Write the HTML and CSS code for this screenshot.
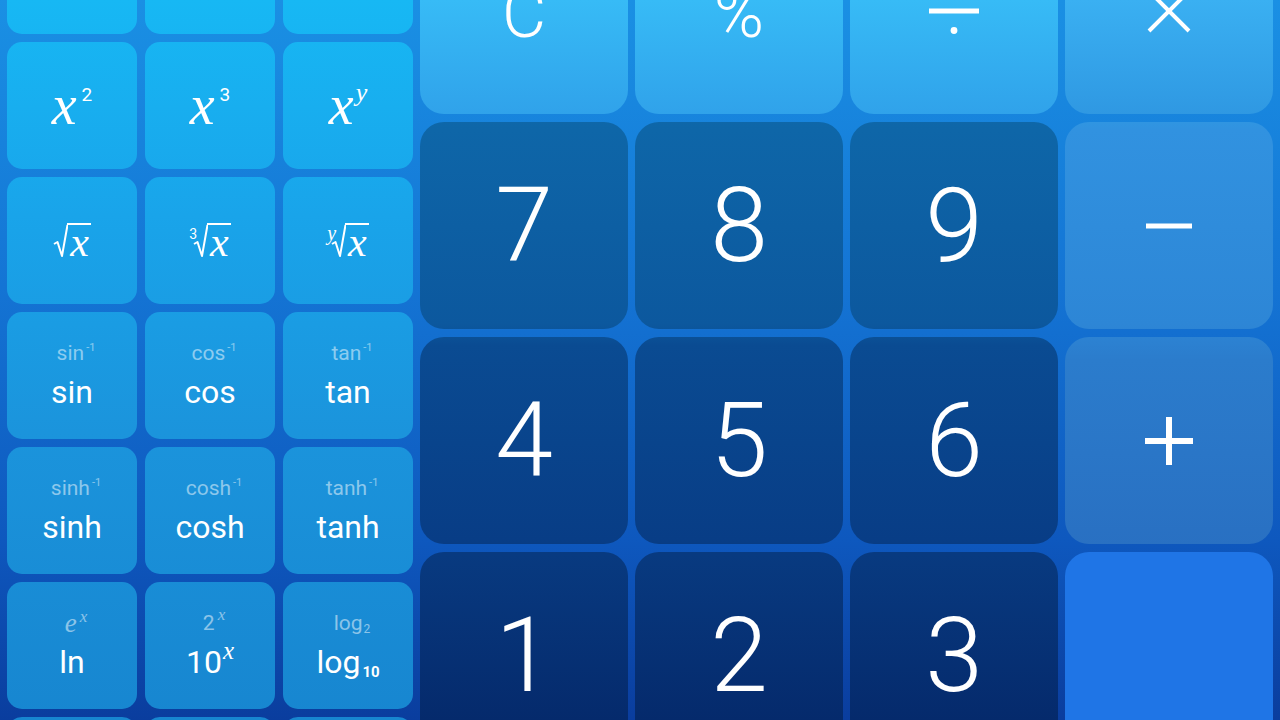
FILE: index.html
```html
<!DOCTYPE html>
<html lang="en">
<head>
  <meta charset="UTF-8">
  <meta name="viewport" content="width=device-width, initial-scale=1.0">
  <title>Calculator</title>
  <link rel="stylesheet" href="styles.css">
</head>
<body>
  <div class="screen">
    <!-- scientific functions -->
    <div class="sci">
      <div class="key fn"></div>
      <div class="key fn"></div>
      <div class="key fn"></div>

      <div class="key fn"><span class="pow"><i class="var big">x</i><span class="exp">2</span></span></div>
      <div class="key fn"><span class="pow"><i class="var big">x</i><span class="exp">3</span></span></div>
      <div class="key fn"><span class="pow"><i class="var big">x</i><i class="exp ity">y</i></span></div>

      <div class="key fn">
        <span class="root">
          <svg class="rad" width="15" height="34" viewBox="0 0 15 34"><path d="M1 20 L4.5 18 L9 32 L14.5 1" fill="none" stroke="#fff" stroke-width="2" stroke-linejoin="round"/></svg><i class="var mid radicand">x</i>
        </span>
      </div>
      <div class="key fn">
        <span class="root">
          <span class="idx">3</span><svg class="rad" width="15" height="34" viewBox="0 0 15 34"><path d="M1 20 L4.5 18 L9 32 L14.5 1" fill="none" stroke="#fff" stroke-width="2" stroke-linejoin="round"/></svg><i class="var mid radicand">x</i>
        </span>
      </div>
      <div class="key fn">
        <span class="root">
          <i class="idx idy">y</i><svg class="rad" width="15" height="34" viewBox="0 0 15 34"><path d="M1 20 L4.5 18 L9 32 L14.5 1" fill="none" stroke="#fff" stroke-width="2" stroke-linejoin="round"/></svg><i class="var mid radicand">x</i>
        </span>
      </div>

      <div class="key fn"><span class="alt">sin<span class="neg">-1</span></span><span class="name">sin</span></div>
      <div class="key fn"><span class="alt">cos<span class="neg">-1</span></span><span class="name">cos</span></div>
      <div class="key fn"><span class="alt">tan<span class="neg">-1</span></span><span class="name">tan</span></div>

      <div class="key fn"><span class="alt">sinh<span class="neg">-1</span></span><span class="name">sinh</span></div>
      <div class="key fn"><span class="alt">cosh<span class="neg">-1</span></span><span class="name">cosh</span></div>
      <div class="key fn"><span class="alt">tanh<span class="neg">-1</span></span><span class="name">tanh</span></div>

      <div class="key fn"><span class="alt"><i class="alt-e">e</i><i class="alt-x">x</i></span><span class="name">ln</span></div>
      <div class="key fn"><span class="alt">2<i class="alt-x">x</i></span><span class="name">10<i class="name-x">x</i></span></div>
      <div class="key fn"><span class="alt">log<span class="sub-s">2</span></span><span class="name">log<span class="sub-b">10</span></span></div>

      <div class="key fn"></div>
      <div class="key fn"></div>
      <div class="key fn"></div>
    </div>

    <!-- main keypad -->
    <div class="pad">
      <div class="key top"><span class="sym">C</span></div>
      <div class="key top"><span class="sym">%</span></div>
      <div class="key top">
        <svg width="50" height="50" viewBox="0 0 50 50"><circle cx="25" cy="5.5" r="3.4" fill="#fff"/><rect x="0" y="22.5" width="50" height="5" fill="#fff"/><circle cx="25" cy="44.5" r="3.4" fill="#fff"/></svg>
      </div>
      <div class="key op">
        <svg width="44" height="44" viewBox="0 0 44 44"><path d="M2 2 L42 42 M42 2 L2 42" stroke="#fff" stroke-width="4"/></svg>
      </div>

      <div class="key num">7</div>
      <div class="key num">8</div>
      <div class="key num">9</div>
      <div class="key op">
        <svg width="46" height="6" viewBox="0 0 46 6"><rect x="0" y="0.5" width="46" height="5" fill="#fff"/></svg>
      </div>

      <div class="key num">4</div>
      <div class="key num">5</div>
      <div class="key num">6</div>
      <div class="key op">
        <svg width="48" height="48" viewBox="0 0 48 48"><path d="M0 24 H48 M24 0 V48" stroke="#fff" stroke-width="6"/></svg>
      </div>

      <div class="key num">1</div>
      <div class="key num">2</div>
      <div class="key num">3</div>
      <div class="key eq"></div>
    </div>
  </div>
</body>
</html>
```

FILE: styles.css
```css
html, body {
  margin: 0;
  height: 720px;
  overflow: hidden;
}
body {
  font-family: Roboto, "Noto Sans", sans-serif;
  color: #fff;
  background: linear-gradient(180deg, #1a90e4 0%, #1474d4 40%, #0e58be 75%, #0a3d9e 100%);
}
.screen {
  display: flex;
  gap: 7px;
  padding: 0 7px;
  margin-top: -93px;
}
.key {
  display: flex;
  flex-direction: column;
  align-items: center;
  justify-content: center;
  line-height: 1;
}

/* left block */
.sci {
  display: grid;
  grid-template-columns: repeat(3, 130px);
  grid-auto-rows: 127px;
  gap: 8px;
}
.fn {
  border-radius: 15px;
  background: linear-gradient(180deg, #17b8f4 0%, #19a4ea 30%, #1b94dc 60%, #1786d0 100%) fixed;
}
.var {
  font-family: "Liberation Serif", serif;
  font-style: italic;
}
.big { font-size: 56px; }
.mid { font-size: 42px; }
.pow {
  display: flex;
  align-items: baseline;
  margin-top: -2px;
}
.exp {
  font-size: 19px;
  margin-left: 5px;
  transform: translateY(-23px);
}
.ity {
  font-family: "Liberation Serif", serif;
  font-style: italic;
  font-size: 26px;
  margin-left: 2px;
}
.root {
  display: flex;
  align-items: flex-start;
}
.rad {
  display: block;
  margin-top: 1px;
}
.radicand {
  display: block;
  border-top: 2px solid #fff;
  padding: 2px 2px 0 3px;
  margin-left: -1px;
  line-height: 30px;
}
.idx {
  font-size: 14px;
  margin-top: 4px;
  margin-right: -4px;
}
.idy {
  font-family: "Liberation Serif", serif;
  font-style: italic;
  font-size: 20px;
  margin-top: 0;
  margin-right: -5px;
}
.alt {
  height: 24px;
  font-size: 21px;
  line-height: 24px;
  color: rgba(255, 255, 255, 0.5);
  margin-bottom: 9px;
  margin-left: 8px;
}
.name {
  height: 36px;
  font-size: 32px;
  line-height: 36px;
}
.neg, .alt-x, .name-x, .sub-s, .sub-b {
  line-height: 0;
}
.neg {
  font-size: 11px;
  vertical-align: 9px;
  margin-left: 2px;
}
.alt-e {
  font-family: "Liberation Serif", serif;
  font-size: 27px;
}
.alt-x {
  font-family: "Liberation Serif", serif;
  font-size: 17px;
  vertical-align: 10px;
  margin-left: 3px;
}
.name-x {
  font-family: "Liberation Serif", serif;
  font-size: 25px;
  vertical-align: 14px;
  margin-left: 1px;
}
.sub-s {
  font-size: 12px;
  vertical-align: -3px;
  margin-left: 1px;
}
.sub-b {
  font-size: 15px;
  font-weight: 700;
  vertical-align: -4px;
  margin-left: 2px;
}

/* right keypad */
.pad {
  display: grid;
  grid-template-columns: repeat(4, 208px);
  grid-auto-rows: 207px;
  gap: 8px 7px;
}
.pad .key {
  border-radius: 24px;
}
.top {
  background: linear-gradient(180deg, #37bbf6 0%, #30a2ea 16%) fixed;
}
.sym {
  font-size: 68px;
  font-weight: 300;
  padding-top: 6px;
}
.op {
  background: linear-gradient(180deg, #3ab0f2 0%, #2f98e2 16%, #3192e0 18%, #2d86d6 45%, #2b7ccc 50%, #2970c2 76%) fixed;
}
.num {
  font-size: 104px;
  font-weight: 300;
  background: linear-gradient(180deg, #1178b8 0%, #0e66a8 18%, #0c589e 45%, #0a4b92 48%, #083d86 75%, #083a80 77%, #052a6c 100%) fixed;
}
.eq {
  background: #1f75e6;
}
```
